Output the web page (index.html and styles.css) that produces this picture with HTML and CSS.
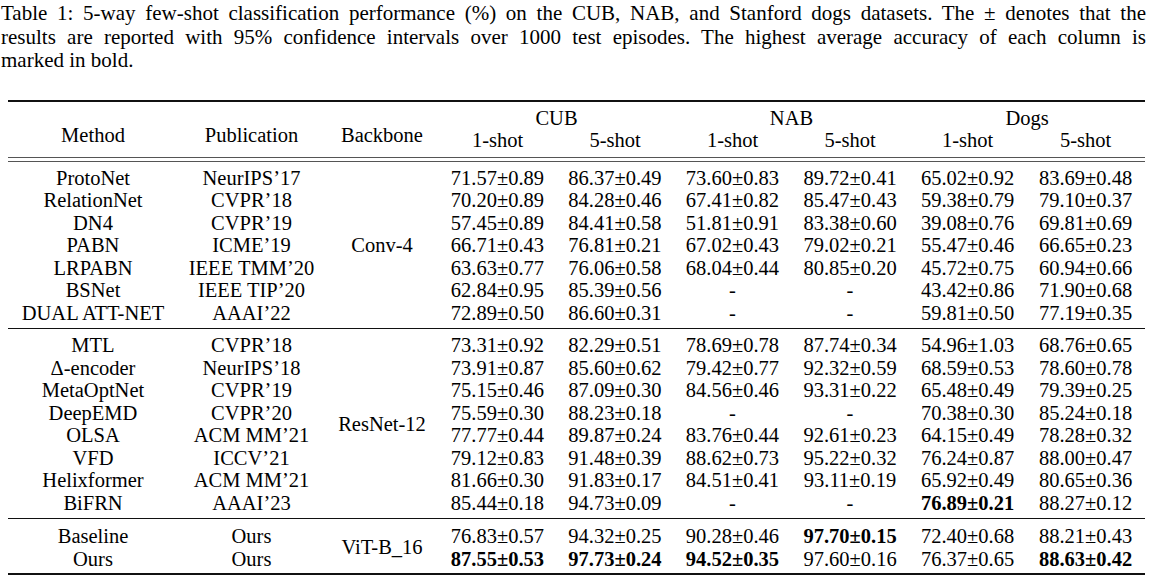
FILE: index.html
```html
<!DOCTYPE html>
<html lang="en">
<head>
<meta charset="utf-8">
<title>Table 1</title>
<link rel="stylesheet" href="styles.css">
</head>
<body>
<div class="caption">
  <div class="cline just">Table 1: 5-way few-shot classification performance (%) on the CUB, NAB, and Stanford dogs datasets. The ± denotes that the</div>
  <div class="cline just">results are reported with 95% confidence intervals over 1000 test episodes. The highest average accuracy of each column is</div>
  <div class="cline">marked in bold.</div>
</div>
<table class="results">
  <colgroup>
    <col class="c-method"><col class="c-pub"><col class="c-bb">
    <col class="c-d1"><col class="c-d2"><col class="c-d1"><col class="c-d2"><col class="c-d1"><col class="c-d3">
  </colgroup>
  <thead>
    <tr class="h1">
      <th rowspan="2" class="mh">Method</th>
      <th rowspan="2" class="mh">Publication</th>
      <th rowspan="2" class="mh">Backbone</th>
      <th colspan="2">CUB</th>
      <th colspan="2">NAB</th>
      <th colspan="2">Dogs</th>
    </tr>
    <tr class="h2">
      <th>1-shot</th><th>5-shot</th><th>1-shot</th><th>5-shot</th><th>1-shot</th><th>5-shot</th>
    </tr>
    <tr class="dbl"><td colspan="9"></td></tr>
  </thead>
  <tbody class="sec">
    <tr><td>ProtoNet</td><td>NeurIPS’17</td><td rowspan="7" class="bb">Conv-4</td><td>71.57±0.89</td><td>86.37±0.49</td><td>73.60±0.83</td><td>89.72±0.41</td><td>65.02±0.92</td><td>83.69±0.48</td></tr>
    <tr><td>RelationNet</td><td>CVPR’18</td><td>70.20±0.89</td><td>84.28±0.46</td><td>67.41±0.82</td><td>85.47±0.43</td><td>59.38±0.79</td><td>79.10±0.37</td></tr>
    <tr><td>DN4</td><td>CVPR’19</td><td>57.45±0.89</td><td>84.41±0.58</td><td>51.81±0.91</td><td>83.38±0.60</td><td>39.08±0.76</td><td>69.81±0.69</td></tr>
    <tr><td>PABN</td><td>ICME’19</td><td>66.71±0.43</td><td>76.81±0.21</td><td>67.02±0.43</td><td>79.02±0.21</td><td>55.47±0.46</td><td>66.65±0.23</td></tr>
    <tr><td>LRPABN</td><td>IEEE TMM’20</td><td>63.63±0.77</td><td>76.06±0.58</td><td>68.04±0.44</td><td>80.85±0.20</td><td>45.72±0.75</td><td>60.94±0.66</td></tr>
    <tr><td>BSNet</td><td>IEEE TIP’20</td><td>62.84±0.95</td><td>85.39±0.56</td><td>-</td><td>-</td><td>43.42±0.86</td><td>71.90±0.68</td></tr>
    <tr><td>DUAL ATT-NET</td><td>AAAI’22</td><td>72.89±0.50</td><td>86.60±0.31</td><td>-</td><td>-</td><td>59.81±0.50</td><td>77.19±0.35</td></tr>
  </tbody>
  <tbody class="sec rule">
    <tr><td>MTL</td><td>CVPR’18</td><td rowspan="8" class="bb">ResNet-12</td><td>73.31±0.92</td><td>82.29±0.51</td><td>78.69±0.78</td><td>87.74±0.34</td><td>54.96±1.03</td><td>68.76±0.65</td></tr>
    <tr><td>Δ-encoder</td><td>NeurIPS’18</td><td>73.91±0.87</td><td>85.60±0.62</td><td>79.42±0.77</td><td>92.32±0.59</td><td>68.59±0.53</td><td>78.60±0.78</td></tr>
    <tr><td>MetaOptNet</td><td>CVPR’19</td><td>75.15±0.46</td><td>87.09±0.30</td><td>84.56±0.46</td><td>93.31±0.22</td><td>65.48±0.49</td><td>79.39±0.25</td></tr>
    <tr><td>DeepEMD</td><td>CVPR’20</td><td>75.59±0.30</td><td>88.23±0.18</td><td>-</td><td>-</td><td>70.38±0.30</td><td>85.24±0.18</td></tr>
    <tr><td>OLSA</td><td>ACM MM’21</td><td>77.77±0.44</td><td>89.87±0.24</td><td>83.76±0.44</td><td>92.61±0.23</td><td>64.15±0.49</td><td>78.28±0.32</td></tr>
    <tr><td>VFD</td><td>ICCV’21</td><td>79.12±0.83</td><td>91.48±0.39</td><td>88.62±0.73</td><td>95.22±0.32</td><td>76.24±0.87</td><td>88.00±0.47</td></tr>
    <tr><td>Helixformer</td><td>ACM MM’21</td><td>81.66±0.30</td><td>91.83±0.17</td><td>84.51±0.41</td><td>93.11±0.19</td><td>65.92±0.49</td><td>80.65±0.36</td></tr>
    <tr><td>BiFRN</td><td>AAAI’23</td><td>85.44±0.18</td><td>94.73±0.09</td><td>-</td><td>-</td><td class="best">76.89±0.21</td><td>88.27±0.12</td></tr>
  </tbody>
  <tbody class="sec rule last">
    <tr><td>Baseline</td><td>Ours</td><td rowspan="2" class="bb">ViT-B_16</td><td>76.83±0.57</td><td>94.32±0.25</td><td>90.28±0.46</td><td class="best">97.70±0.15</td><td>72.40±0.68</td><td>88.21±0.43</td></tr>
    <tr><td>Ours</td><td>Ours</td><td class="best">87.55±0.53</td><td class="best">97.73±0.24</td><td class="best">94.52±0.35</td><td>97.60±0.16</td><td>76.37±0.65</td><td class="best">88.63±0.42</td></tr>
  </tbody>
</table>
</body>
</html>
```

FILE: styles.css
```css
html, body {
  margin: 0;
  padding: 0;
  background: #ffffff;
  color: #000000;
}

body {
  font-family: "Liberation Serif", "Times New Roman", serif;
}

.caption {
  width: 1145px;
  margin-left: 1px;
  padding-top: 2px;
  font-size: 21px;
  line-height: 23.5px;
}

.cline {
  white-space: nowrap;
}

.cline.just {
  white-space: normal;
  text-align: justify;
  text-align-last: justify;
}

.results {
  margin: 27px 0 0 8px;
  width: 1137px;
  table-layout: fixed;
  border-collapse: separate;
  border-spacing: 0;
  border-top: 2px solid #111;
  border-bottom: 2px solid #111;
  font-size: 20.5px;
  line-height: 22.5px;
}

.c-method { width: 170px; }
.c-pub { width: 147px; }
.c-bb { width: 114px; }
.c-d1 { width: 117px; }
.c-d2 { width: 118px; }
.c-d3 { width: 119px; }

.results th,
.results td {
  padding: 0;
  text-align: center;
  font-weight: normal;
  white-space: nowrap;
}

.h1 th {
  padding-top: 5px;
}

.h2 th {
  padding-bottom: 5px;
}

.results th.mh {
  vertical-align: top;
  padding-top: 22px;
}

.dbl td {
  height: 3px;
  padding: 0;
  border-top: 1px solid #555;
  border-bottom: 1px solid #555;
  font-size: 0;
  line-height: 0;
}

.sec tr:first-child td {
  padding-top: 5px;
}

.sec tr:last-child td {
  padding-bottom: 4px;
}

.sec.last tr:first-child td {
  padding-top: 6px;
}

.sec.last tr:last-child td {
  padding-bottom: 3px;
}

.sec.rule tr:first-child td {
  border-top: 1px solid #111;
}

.results td.bb {
  vertical-align: middle;
  padding-top: 5px;
  padding-bottom: 4px;
}

.results .sec.last td.bb {
  padding-top: 6px;
  padding-bottom: 3px;
}

.results td.best {
  font-weight: bold;
}
```
